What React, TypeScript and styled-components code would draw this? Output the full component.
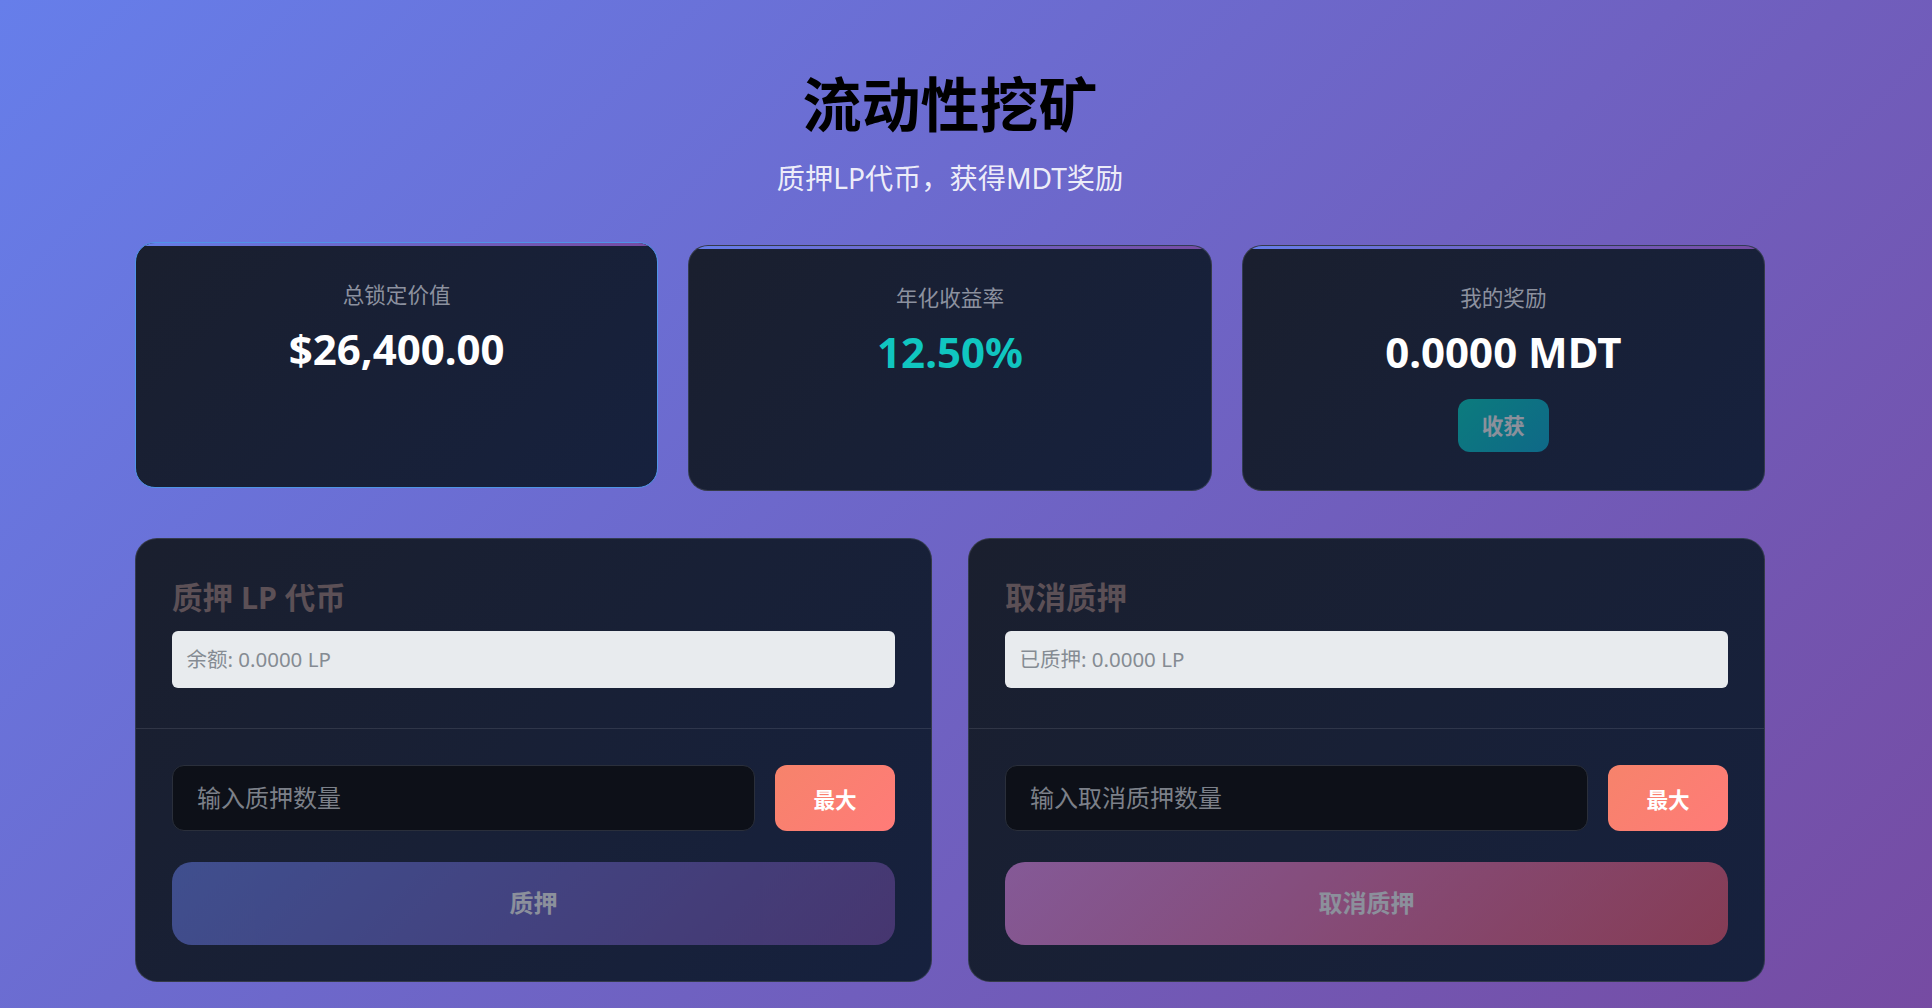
import React from "react";
import styled, { createGlobalStyle, css } from "styled-components";

const GlobalStyle = createGlobalStyle`
  * { box-sizing: border-box; }
  html, body { margin: 0; padding: 0; }
  body {
    font-family: "Noto Sans", "Noto Sans CJK SC", sans-serif;
    background: linear-gradient(135deg, #667eea 0%, #764ba2 100%);
    min-height: 100vh;
  }
`;

const Page = styled.div`
  min-height: 1008px;
  padding: 69px 167px 40px 135px;
`;

const Header = styled.header`
  display: flex;
  flex-direction: column;
  align-items: center;
  margin-bottom: 46px;
`;

const Title = styled.h1`
  margin: 0 0 18px;
  font-size: 59px;
  line-height: 1.2;
  font-weight: 700;
  color: #000;
`;

const Subtitle = styled.p`
  margin: 0;
  font-size: 28.2px;
  line-height: 1.45;
  color: rgba(255, 255, 255, 0.9);
`;

const StatsGrid = styled.section`
  display: grid;
  grid-template-columns: repeat(3, 1fr);
  gap: 30px;
  margin-bottom: 47px;
`;

const StatCard = styled.div<{ $active?: boolean }>`
  position: relative;
  overflow: hidden;
  display: flex;
  flex-direction: column;
  align-items: center;
  padding: 36px 24px 38px;
  border-radius: 20px;
  background: linear-gradient(135deg, #1a1f2e 0%, #16213e 100%);
  border: 1px solid rgba(255, 255, 255, 0.12);
  &::before {
    content: "";
    position: absolute;
    top: 0;
    left: 0;
    right: 0;
    height: 3px;
    background: linear-gradient(90deg, #667eea, #764ba2);
  }
  ${(p) =>
    p.$active &&
    css`
      transform: translateY(-3px);
      border-color: #4f94e6;
    `}
`;

const StatLabel = styled.div`
  font-size: 21.6px;
  line-height: 1.5;
  color: #8c919f;
  margin-bottom: 6px;
`;

const StatValue = styled.div<{ $accent?: boolean }>`
  font-size: 42px;
  line-height: 1.5;
  font-weight: 700;
  color: ${(p) => (p.$accent ? "#10c6c0" : "#ffffff")};
`;

const HarvestButton = styled.button`
  margin-top: 16px;
  padding: 11px 24px;
  border: none;
  border-radius: 12px;
  font-family: inherit;
  font-size: 21.6px;
  line-height: 1.45;
  font-weight: 700;
  color: #fff;
  background: linear-gradient(135deg, #00d6c4 0%, #08b0d6 100%);
  opacity: 0.5;
`;

const PanelsGrid = styled.section`
  display: grid;
  grid-template-columns: repeat(2, 1fr);
  gap: 36px;
`;

const Panel = styled.div`
  border-radius: 22px;
  background: linear-gradient(135deg, #1a1f2e 0%, #16213e 100%);
  border: 1px solid rgba(255, 255, 255, 0.12);
  overflow: hidden;
`;

const PanelTop = styled.div`
  padding: 36px 36px 40px;
  border-bottom: 1px solid rgba(255, 255, 255, 0.1);
`;

const PanelTitle = styled.h3`
  margin: 0 0 11px;
  font-size: 30.5px;
  line-height: 1.45;
  font-weight: 700;
  color: #5c5056;
`;

const InfoBox = styled.div`
  padding: 13.5px 14.4px;
  border-radius: 6px;
  background: #e8ebee;
  color: #858b93;
  font-size: 20.5px;
  line-height: 1.5;
`;

const PanelBottom = styled.div`
  padding: 36px;
  display: flex;
  flex-direction: column;
  gap: 31px;
`;

const InputRow = styled.div`
  display: flex;
  gap: 20px;
`;

const AmountInput = styled.input`
  flex: 1;
  min-width: 0;
  padding: 17.5px 24px;
  border-radius: 12px;
  border: 1px solid #2a2f3b;
  background: #0d1018;
  color: #fff;
  font-family: inherit;
  font-size: 24px;
  line-height: 1.2;
  outline: none;
  &::placeholder {
    color: #7c8089;
  }
`;

const MaxButton = styled.button`
  width: 120px;
  border: none;
  border-radius: 12px;
  font-family: inherit;
  font-size: 21.6px;
  font-weight: 700;
  color: #fff;
  background: linear-gradient(135deg, #f6836b 0%, #ff7b78 100%);
`;

const ActionButton = styled.button<{ $variant: "stake" | "unstake" }>`
  width: 100%;
  padding: 24px;
  border: none;
  border-radius: 20px;
  font-family: inherit;
  font-size: 24px;
  line-height: 1.45;
  font-weight: 700;
  color: #fff;
  opacity: 0.5;
  background: ${(p) =>
    p.$variant === "stake"
      ? "linear-gradient(135deg, #667eea 0%, #764ba2 100%)"
      : "linear-gradient(135deg, #f093fb 0%, #f5576c 100%)"};
`;

type PanelProps = {
  title: string;
  info: string;
  placeholder: string;
  action: string;
  variant: "stake" | "unstake";
};

function ActionPanel({ title, info, placeholder, action, variant }: PanelProps) {
  return (
    <Panel>
      <PanelTop>
        <PanelTitle>{title}</PanelTitle>
        <InfoBox>{info}</InfoBox>
      </PanelTop>
      <PanelBottom>
        <InputRow>
          <AmountInput placeholder={placeholder} />
          <MaxButton>最大</MaxButton>
        </InputRow>
        <ActionButton $variant={variant}>{action}</ActionButton>
      </PanelBottom>
    </Panel>
  );
}

export default function App() {
  return (
    <>
      <GlobalStyle />
      <Page>
        <Header>
          <Title>流动性挖矿</Title>
          <Subtitle>质押LP代币，获得MDT奖励</Subtitle>
        </Header>
        <StatsGrid>
          <StatCard $active>
            <StatLabel>总锁定价值</StatLabel>
            <StatValue>$26,400.00</StatValue>
          </StatCard>
          <StatCard>
            <StatLabel>年化收益率</StatLabel>
            <StatValue $accent>12.50%</StatValue>
          </StatCard>
          <StatCard>
            <StatLabel>我的奖励</StatLabel>
            <StatValue>0.0000 MDT</StatValue>
            <HarvestButton>收获</HarvestButton>
          </StatCard>
        </StatsGrid>
        <PanelsGrid>
          <ActionPanel
            title="质押 LP 代币"
            info="余额: 0.0000 LP"
            placeholder="输入质押数量"
            action="质押"
            variant="stake"
          />
          <ActionPanel
            title="取消质押"
            info="已质押: 0.0000 LP"
            placeholder="输入取消质押数量"
            action="取消质押"
            variant="unstake"
          />
        </PanelsGrid>
      </Page>
    </>
  );
}
